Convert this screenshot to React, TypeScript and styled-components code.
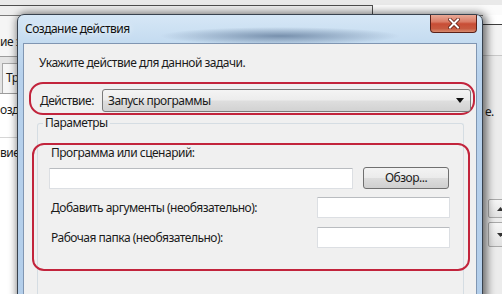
import React from 'react';
import styled, { createGlobalStyle } from 'styled-components';

const GlobalStyle = createGlobalStyle`
  html, body {
    margin: 0;
    padding: 0;
    background: #ffffff;
  }
  body {
    font-family: "Noto Sans", "Liberation Sans", sans-serif;
    font-size: 12px;
    letter-spacing: -0.5px;
    color: #1b1b1b;
  }
`;

const Desktop = styled.div`
  position: relative;
  width: 502px;
  height: 294px;
  overflow: hidden;
  background: #ffffff;
`;

/* ---------- window behind the dialog ---------- */

const BackWindow = styled.div`
  display: flex;
  flex-direction: column;
  width: 100%;
  height: 100%;
`;

const TopStrip = styled.div`
  height: 5px;
  background: #e9e9e9;
`;

const ToolRow = styled.div`
  display: flex;
  height: 10px;
`;

const ToolPanel = styled.div`
  width: 372px;
  border-top: 1px solid #4e4e4e;
  border-right: 1px solid #4e4e4e;
  background: #eeeeee;
`;

const ToolRest = styled.div`
  flex: 1;
  background: #fbfbfb;
`;

const BackBody = styled.div`
  flex: 1;
  display: grid;
  grid-template-columns: 1fr 19px;
`;

const LeftPane = styled.div`
  display: flex;
  flex-direction: column;
  border-top: 1px solid #7a7a7a;
  overflow: hidden;
`;

const BackRow = styled.div<{ h: number; bg?: string; line?: string }>`
  height: ${p => p.h}px;
  display: flex;
  align-items: flex-end;
  background: ${p => p.bg || '#ffffff'};
  border-bottom: 1px solid ${p => p.line || 'transparent'};
  white-space: nowrap;
  line-height: 16px;
`;

const BackText = styled.span<{ bottom?: number }>`
  margin-bottom: ${p => p.bottom || 0}px;
`;

const TabBox = styled.div`
  align-self: stretch;
  margin: 6px 0 0 2px;
  padding: 6px 0 0 3px;
  border-left: 1px solid #a8a8a8;
  border-top: 1px solid #a8a8a8;
  background: #f6f6f6;
  flex: 1;
`;

const RightPane = styled.div`
  display: flex;
  flex-direction: column;
  background: #ececec;
`;

const RightTop = styled.div`
  height: 9px;
  background: #ffffff;
  border-bottom: 1px solid #3e3e3e;
`;

const RightHead = styled.div`
  height: 30px;
  background: #f3f3f3;
  border-bottom: 1px solid #c8c8c8;
`;

const RightText = styled.div`
  margin-top: 48px;
  padding-left: 2px;
  line-height: 16px;
  white-space: nowrap;
`;

const Spin = styled.div<{ gap: number; h: number }>`
  margin: ${p => p.gap}px 0 0 5px;
  height: ${p => p.h}px;
  width: 20px;
  box-sizing: border-box;
  border: 1px solid #a9a9a9;
  border-radius: 2px;
  background: linear-gradient(#f6f6f6, #e2e2e2);
  display: flex;
  align-items: center;
  padding-left: 8px;
`;

/* ---------- dialog ---------- */

const Dialog = styled.div`
  position: absolute;
  left: 17px;
  top: 14px;
  width: 466px;
  height: 300px;
  box-sizing: border-box;
  border: 1px solid #38424e;
  border-radius: 7px 7px 0 0;
  padding: 0 5px;
  display: flex;
  flex-direction: column;
  background:
    radial-gradient(ellipse 120px 9px at 262px 21px, rgba(92, 118, 150, 0.75), rgba(92, 118, 150, 0) 100%),
    linear-gradient(#d6e7f6 0px, #c4dbf0 28px, #b7d1ec 60px, #b3ceea 100%);
  box-shadow: 2px 1px 9px 2px rgba(0, 0, 0, 0.55);
`;

const TitleBar = styled.div`
  height: 28px;
  display: flex;
  justify-content: space-between;
  align-items: flex-start;
`;

const Title = styled.div`
  padding: 6px 0 0 2px;
  line-height: 16px;
  color: #101010;
  text-shadow: 0 0 6px rgba(255, 255, 255, 0.9);
`;

const CloseButton = styled.div`
  width: 47px;
  height: 18px;
  box-sizing: border-box;
  border: 1px solid #5a2119;
  border-top: none;
  border-radius: 0 0 4px 4px;
  background: linear-gradient(#e9a996 0%, #da7c66 40%, #c84d35 52%, #c75a40 80%, #d88b6f 100%);
  display: flex;
  align-items: center;
  justify-content: center;
`;

const Client = styled.div`
  flex: 1;
  background: #f0f0f0;
  border: 1px solid #8096b2;
  border-bottom: none;
  display: flex;
  flex-direction: column;
`;

const Instruction = styled.div`
  margin: 11px 0 0 15px;
  line-height: 16px;
`;

const Highlight = styled.div<{ radius: number }>`
  box-sizing: border-box;
  border: 2px solid #c2243c;
  border-radius: ${p => p.radius}px;
`;

const ActionBox = styled(Highlight)`
  margin: 11px 0 0 5px;
  width: 446px;
  height: 33px;
  display: flex;
  align-items: center;
  padding: 5px 2px 1px 9px;
`;

const ActionLabel = styled.span`
  width: 62px;
  line-height: 16px;
`;

const Select = styled.div`
  flex: 1;
  height: 23px;
  box-sizing: border-box;
  border: 1px solid #7a7a7a;
  border-radius: 3px;
  background: linear-gradient(#f4f4f4 0%, #ececec 48%, #dedede 52%, #d2d2d2 100%);
  display: flex;
  align-items: center;
  justify-content: space-between;
  padding: 0 6px 0 5px;
  line-height: 16px;
`;

const GroupBox = styled.fieldset`
  margin: 0 12px 0 13px;
  padding: 0;
  border: 1px solid #d5dde3;
  border-bottom: none;
  border-radius: 3px 3px 0 0;
  flex: 1;
  min-width: 0;
`;

const Legend = styled.legend`
  margin-left: 5px;
  padding: 0 2px;
  line-height: 16px;
`;

const ParamsBox = styled(Highlight)`
  margin: 12px -7px 0 -6px;
  height: 128px;
  padding-right: 18px;
  display: flex;
  flex-direction: column;
`;

const FieldLabel = styled.div`
  padding-left: 17px;
  line-height: 16px;
  white-space: nowrap;
`;

const FieldRow = styled.div<{ gap: number }>`
  display: flex;
  align-items: center;
  margin-top: ${p => p.gap}px;
`;

const TextInput = styled.div<{ w: number }>`
  width: ${p => p.w}px;
  height: 21px;
  box-sizing: border-box;
  background: #ffffff;
  border: 1px solid #dcdfe3;
  border-top-color: #b9bcc0;
  border-radius: 1px;
`;

const ProgramInput = styled(TextInput)`
  margin-left: 15px;
`;

const OptionalInput = styled(TextInput)`
  margin-left: auto;
`;

const BrowseButton = styled.div`
  margin-left: 10px;
  width: 86px;
  height: 22px;
  box-sizing: border-box;
  border: 1px solid #707070;
  border-radius: 3px;
  background: linear-gradient(#f3f3f3 0%, #ebebeb 48%, #dddddd 52%, #cfcfcf 100%);
  display: flex;
  align-items: center;
  justify-content: center;
  line-height: 16px;
`;

const CloseGlyph = () => (
  <svg width="12" height="11" viewBox="0 0 12 11">
    <path d="M2 1.5 L10 9.5 M10 1.5 L2 9.5" stroke="#5b1d12" strokeWidth="3.6" strokeLinecap="square" />
    <path d="M2 1.5 L10 9.5 M10 1.5 L2 9.5" stroke="#ffffff" strokeWidth="2" strokeLinecap="square" />
  </svg>
);

const DropArrow = () => (
  <svg width="8" height="5" viewBox="0 0 8 5">
    <path d="M0 0 H8 L4 5 Z" fill="#111" />
  </svg>
);

const SpinArrow = ({ up }: { up?: boolean }) => (
  <svg width="7" height="4" viewBox="0 0 7 4">
    <path d={up ? 'M0 4 H7 L3.5 0 Z' : 'M0 0 H7 L3.5 4 Z'} fill="#333" />
  </svg>
);

export default function App() {
  return (
    <Desktop>
      <GlobalStyle />
      <BackWindow>
        <TopStrip />
        <ToolRow>
          <ToolPanel />
          <ToolRest />
        </ToolRow>
        <BackBody>
          <LeftPane>
            <BackRow h={40} bg="#f5f5f5" line="#9c9c9c">
              <BackText bottom={6}>ие з</BackText>
            </BackRow>
            <BackRow h={36} bg="#e4e4e4" line="#9c9c9c">
              <TabBox>Тр</TabBox>
            </BackRow>
            <BackRow h={43} line="#d6d6d6">
              <BackText bottom={19}>озда</BackText>
            </BackRow>
            <BackRow h={22}>
              <BackText bottom={-1}>вие</BackText>
            </BackRow>
          </LeftPane>
          <RightPane>
            <RightTop />
            <RightHead />
            <RightText>е.</RightText>
            <Spin gap={79} h={19}>
              <SpinArrow up />
            </Spin>
            <Spin gap={4} h={25}>
              <SpinArrow />
            </Spin>
          </RightPane>
        </BackBody>
      </BackWindow>

      <Dialog>
        <TitleBar>
          <Title>Создание действия</Title>
          <CloseButton>
            <CloseGlyph />
          </CloseButton>
        </TitleBar>
        <Client>
          <Instruction>Укажите действие для данной задачи.</Instruction>
          <ActionBox radius={14}>
            <ActionLabel>Действие:</ActionLabel>
            <Select>
              <span>Запуск программы</span>
              <DropArrow />
            </Select>
          </ActionBox>
          <GroupBox>
            <Legend>Параметры</Legend>
            <ParamsBox radius={12}>
              <FieldLabel>Программа или сценарий:</FieldLabel>
              <FieldRow gap={6}>
                <ProgramInput w={304} />
                <BrowseButton>Обзор...</BrowseButton>
              </FieldRow>
              <FieldRow gap={8}>
                <FieldLabel>Добавить аргументы (необязательно):</FieldLabel>
                <OptionalInput w={133} />
              </FieldRow>
              <FieldRow gap={9}>
                <FieldLabel>Рабочая папка (необязательно):</FieldLabel>
                <OptionalInput w={133} />
              </FieldRow>
            </ParamsBox>
          </GroupBox>
        </Client>
      </Dialog>
    </Desktop>
  );
}
